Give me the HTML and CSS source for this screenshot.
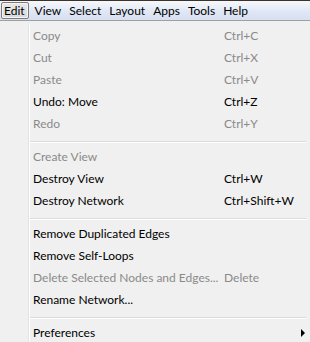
FILE: index.html
```html
<!DOCTYPE html>
<html lang="en">
<head>
  <meta charset="UTF-8">
  <title>Edit menu</title>
  <link rel="stylesheet" href="styles.css">
</head>
<body>
  <div class="menubar">
    <span class="menubar-item active">Edit</span>
    <span class="menubar-item">View</span>
    <span class="menubar-item">Select</span>
    <span class="menubar-item">Layout</span>
    <span class="menubar-item">Apps</span>
    <span class="menubar-item">Tools</span>
    <span class="menubar-item">Help</span>
  </div>

  <div class="menu">
    <div class="menu-body">
      <div class="item disabled"><span>Copy</span><span>Ctrl+C</span></div>
      <div class="item disabled"><span>Cut</span><span>Ctrl+X</span></div>
      <div class="item disabled"><span>Paste</span><span>Ctrl+V</span></div>
      <div class="item"><span>Undo: Move</span><span>Ctrl+Z</span></div>
      <div class="item disabled"><span>Redo</span><span>Ctrl+Y</span></div>
      <div class="separator"></div>
      <div class="item disabled"><span>Create View</span><span></span></div>
      <div class="item"><span>Destroy View</span><span>Ctrl+W</span></div>
      <div class="item"><span>Destroy Network</span><span>Ctrl+Shift+W</span></div>
      <div class="separator"></div>
      <div class="item"><span>Remove Duplicated Edges</span><span></span></div>
      <div class="item"><span>Remove Self-Loops</span><span></span></div>
      <div class="item disabled"><span>Delete Selected Nodes and Edges...</span><span>Delete</span></div>
      <div class="item"><span>Rename Network...</span><span></span></div>
      <div class="separator"></div>
      <div class="item submenu"><span>Preferences</span><span></span></div>
    </div>
  </div>
</body>
</html>
```

FILE: styles.css
```css
body {
  margin: 0;
  background: #f0f0f0;
  font-family: Lato, "Noto Sans", sans-serif;
  font-size: 12px;
  color: #000;
  overflow: hidden;
}
.menubar {
  display: flex;
  align-items: center;
  height: 19px;
  padding: 0 0 0 1px;
  border-top: 1px solid #3b3328;
  border-bottom: 1px solid #a0a0a0;
  background: linear-gradient(#f6f8fc, #dfe6f4 60%, #d8e0f1);
}
.menubar-item {
  padding: 0 3px;
  height: 17px;
  line-height: 16px;
  border: 1px solid transparent;
  border-radius: 2px;
  box-sizing: border-box;
  white-space: nowrap;
}
.menubar-item.active {
  border-color: #7c7c7c;
  background: linear-gradient(#e8e8e8, #dadada);
  box-shadow: inset 0 0 0 1px #f4f4f4;
  padding: 0 3px 0 2px;
  margin-right: 2px;
}
.menu {
  padding: 4px 0 0 28px;
  background: #f0f0f0;
}
.menu-body {
  border-left: 1px solid #e2e3e3;
  box-shadow: inset 1px 0 #fff;
  padding-left: 1px;
}
.item {
  display: grid;
  grid-template-columns: 191px 1fr;
  height: 22px;
  line-height: 22px;
  padding-left: 3px;
  white-space: nowrap;
  position: relative;
}
.item.disabled {
  color: #8a8a8a;
}
.separator {
  height: 11px;
  margin-right: 4px;
  box-sizing: border-box;
  padding-top: 6px;
}
.separator::before {
  content: "";
  display: block;
  border-top: 1px solid #dcdcdc;
  border-bottom: 1px solid #fff;
}
.submenu::after {
  content: "";
  position: absolute;
  right: 5px;
  top: 7px;
  border-left: 4px solid #000;
  border-top: 4px solid transparent;
  border-bottom: 4px solid transparent;
}
```
